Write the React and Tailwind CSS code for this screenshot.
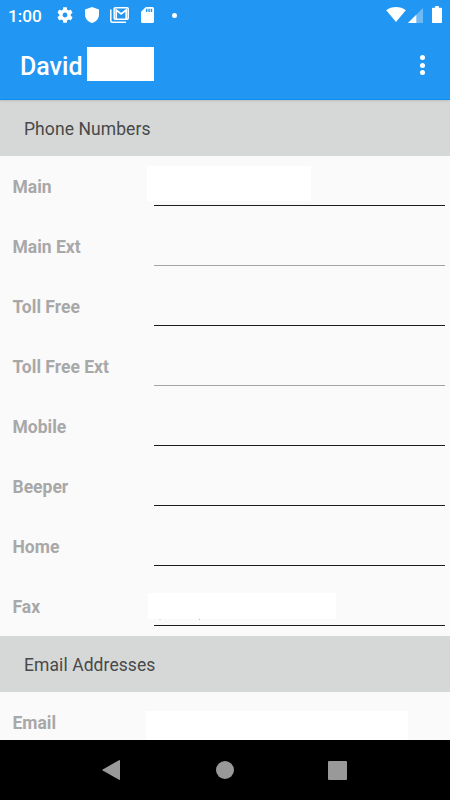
const phoneFields = [
  { label: 'Main', line: 'bg-[#1c1c1c]', box: 'left-[-7px] top-[10px] w-[164px] h-[35px]' },
  { label: 'Main Ext', line: 'bg-[#a3a3a3]' },
  { label: 'Toll Free', line: 'bg-[#1c1c1c]' },
  { label: 'Toll Free Ext', line: 'bg-[#a3a3a3]' },
  { label: 'Mobile', line: 'bg-[#1c1c1c]' },
  { label: 'Beeper', line: 'bg-[#1c1c1c]' },
  { label: 'Home', line: 'bg-[#1c1c1c]' },
  { label: 'Fax', line: 'bg-[#1c1c1c]', box: 'left-[-6px] top-[17px] w-[188px] h-[26px]', marks: true },
]

function StatusBar() {
  return (
    <div className="h-8 shrink-0 flex items-start pl-2 pr-[8px] text-white">
      <span className="w-[49px] shrink-0 pt-[6px] text-[17.2px] leading-[21px] font-medium">1:00</span>
      <div className="flex">
        {/* Settings */}
        <svg className="w-4 h-[16px] mt-[7px]" viewBox="2 2 20 20" fill="currentColor">
          <path d="M19.14 12.94c.04-.3.06-.61.06-.94 0-.32-.02-.64-.07-.94l2.03-1.58c.18-.14.23-.41.12-.61l-1.92-3.32c-.12-.22-.37-.29-.59-.22l-2.39.96c-.5-.38-1.03-.7-1.62-.94l-.36-2.54c-.04-.24-.24-.41-.48-.41h-3.84c-.24 0-.43.17-.47.41l-.36 2.54c-.59.24-1.13.57-1.62.94l-2.39-.96c-.22-.08-.47 0-.59.22L2.74 8.87c-.12.21-.08.47.12.61l2.03 1.58c-.05.3-.09.63-.09.94s.02.64.07.94l-2.03 1.58c-.18.14-.23.41-.12.61l1.92 3.32c.12.22.37.29.59.22l2.39-.96c.5.38 1.03.7 1.62.94l.36 2.54c.05.24.24.41.48.41h3.84c.24 0 .44-.17.47-.41l.36-2.54c.59-.24 1.13-.56 1.62-.94l2.39.96c.22.08.47 0 .59-.22l1.92-3.32c.12-.22.07-.47-.12-.61l-2.01-1.58zM12 15c-1.66 0-3-1.34-3-3s1.34-3 3-3 3 1.34 3 3-1.34 3-3 3z" />
        </svg>
        {/* Shield */}
        <svg className="w-[14px] h-4 mt-[7px] ml-3" viewBox="0 0 14 16" fill="currentColor">
          <path d="M7 0L0 2.6V7.5C0 11.6 3.1 15 7 16c3.9-1 7-4.4 7-8.5V2.6L7 0z" />
        </svg>
        {/* Mail stack */}
        <svg className="w-[19px] h-4 mt-[7px] ml-[11px]" viewBox="0 0 19 16" fill="none" stroke="currentColor">
          <path d="M.8 2.5V13.7Q.8 15.2 2.3 15.2H16" strokeWidth="1.5" />
          <rect x="4.2" y=".75" width="14" height="11.5" rx="1" strokeWidth="1.5" />
          <path d="M6.2 12V3L11.2 7L16.2 3V12" strokeWidth="1.7" />
        </svg>
        {/* SD card */}
        <svg className="w-[13px] h-4 mt-[7px] ml-[12px]" viewBox="0 0 13 16" fill="currentColor">
          <path fillRule="evenodd" d="M4.8 0H11.5Q13 0 13 1.5V14.5Q13 16 11.5 16H1.5Q0 16 0 14.5V4.8L4.8 0zM4.9 1.8V5H6.4V1.8zM7.3 1.8V5H8.8V1.8zM9.7 1.8V5H11.2V1.8z" />
        </svg>
        <span className="w-[5px] h-[5px] rounded-full bg-white mt-[12.5px] ml-[18px]" />
      </div>
      <div className="ml-auto flex">
        {/* Wifi */}
        <svg className="w-5 h-[15px] mt-[7px]" viewBox="0 0 20 15" fill="currentColor">
          <path d="M10 15L.2 3.2C3 .9 6.3 0 10 0s7 .9 9.8 3.2L10 15z" />
        </svg>
        {/* Signal */}
        <svg className="w-[15px] h-[15px] mt-2 ml-[2px]" viewBox="0 0 15 15" fill="currentColor">
          <path d="M0 15L15 0V15z" opacity=".35" />
          <path d="M0 15L8.3 6.7V15z" />
        </svg>
        {/* Battery */}
        <svg className="w-[10px] h-[17px] mt-[6px] ml-[9px]" viewBox="0 0 10 17" fill="currentColor">
          <path d="M3.2 0H6.8V1.7H9.2Q10 1.7 10 2.5V16.2Q10 17 9.2 17H.8Q0 17 0 16.2V2.5Q0 1.7 .8 1.7H3.2z" />
        </svg>
      </div>
    </div>
  )
}

function SectionHeader({ title }) {
  return (
    <div className="h-14 shrink-0 flex items-center bg-[#d6d8d7] pl-6 pt-[3px] text-[#484949] text-[17.5px] font-normal tracking-[0.08px]">
      {title}
    </div>
  )
}

function Field({ label, line, box, marks }) {
  return (
    <div className="h-[60px] shrink-0 flex pl-[12.5px] pr-[5px]">
      <label className="w-[141px] shrink-0 pt-5 text-[17.5px] leading-[22px] font-bold text-[#a8a8a8]">{label}</label>
      <div className="relative flex-1 pt-[49px]">
        {box && <div className={`absolute bg-white ${box}`} />}
        {marks && (
          <>
            <span className="absolute left-[5px] top-[43px] w-[2px] h-px bg-[#dddddd]" />
            <span className="absolute left-[45px] top-[43px] w-px h-px bg-[#bbbbbb]" />
          </>
        )}
        {line && <div className={`h-px ${line}`} />}
      </div>
    </div>
  )
}

function App() {
  return (
    <div className="w-full h-screen flex flex-col overflow-hidden bg-[#fafafa] font-['Roboto',sans-serif]">

      {/* App bar */}
      <header className="relative z-10 h-[100px] shrink-0 flex flex-col bg-[#2196f3] border-b border-[#0d8ff2] shadow-[0_1px_2px_rgba(0,0,0,0.12)]">
        <StatusBar />
        <div className="flex-1 flex items-start pl-5 pr-[25px] text-white">
          <h1 className="w-[67px] shrink-0 pt-[20px] text-[25px] leading-[30px] font-medium">David</h1>
          <div className="w-[67px] h-[34px] mt-[15px] bg-white" />
          <div className="ml-auto mt-[23px] flex flex-col gap-[2.5px]">
            <span className="w-[5px] h-[5px] rounded-full bg-white" />
            <span className="w-[5px] h-[5px] rounded-full bg-white" />
            <span className="w-[5px] h-[5px] rounded-full bg-white" />
          </div>
        </div>
      </header>

      {/* Contact details */}
      <main className="flex-1 min-h-0 flex flex-col overflow-hidden">
        <SectionHeader title="Phone Numbers" />
        {phoneFields.map((field) => (
          <Field key={field.label} {...field} />
        ))}
        <SectionHeader title="Email Addresses" />
        <Field label="Email" box="left-[-8px] top-[19px] w-[262px] h-[29px]" />
      </main>

      {/* Navigation bar */}
      <nav className="h-[60px] shrink-0 bg-black flex items-center text-[#999999]">
        <svg className="w-[18px] h-5 ml-[102px]" viewBox="0 0 18 20" fill="currentColor">
          <path d="M17 .2Q18 -.2 18 .8V19.2Q18 20.2 17 19.8L.7 10.6Q0 10 .7 9.4z" />
        </svg>
        <span className="w-[18px] h-[18px] rounded-full bg-[#999999] ml-24" />
        <span className="w-[19px] h-[19px] rounded-[1px] bg-[#999999] ml-[94px]" />
      </nav>

    </div>
  )
}

export default App
